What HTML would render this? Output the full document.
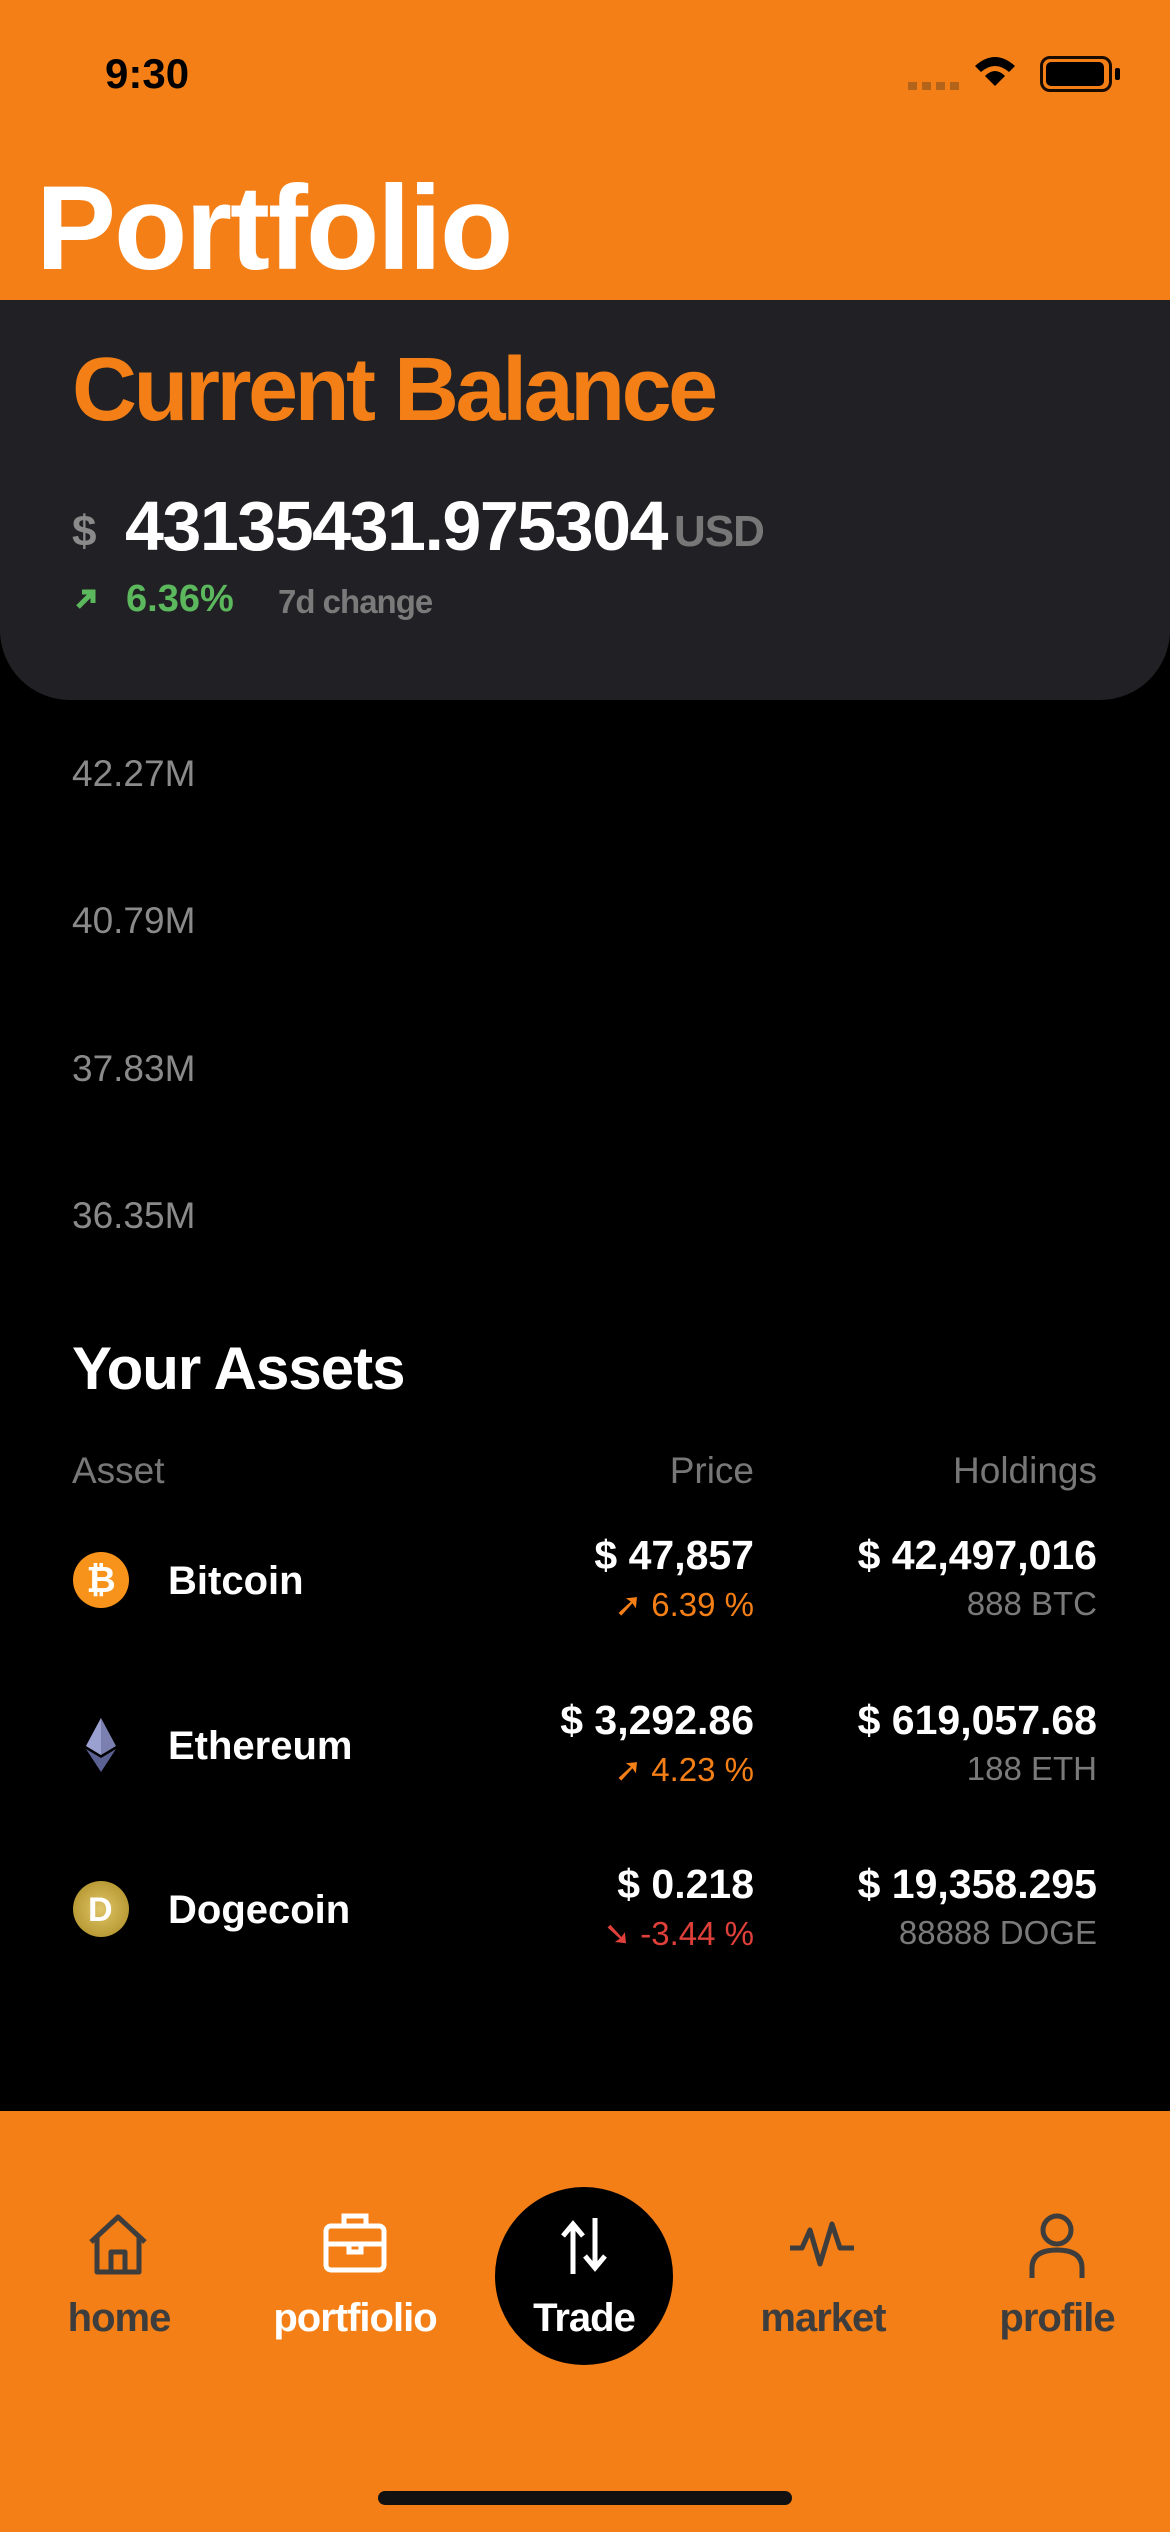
<!DOCTYPE html>
<html><head><meta charset="utf-8"><style>
*{margin:0;padding:0;box-sizing:border-box}
body{width:1170px;height:2532px;background:#000;font-family:"Liberation Sans",sans-serif;position:relative;overflow:hidden;color:#fff}
.a{position:absolute;white-space:nowrap}
.top{position:absolute;left:0;top:0;width:1170px;height:300px;background:#F47F16}
.card{position:absolute;left:0;top:300px;width:1170px;height:400px;background:#212125;border-radius:0 0 70px 70px}
.nav{position:absolute;left:0;top:2111px;width:1170px;height:421px;background:#F47F16}
.r{text-align:right}
.b{font-weight:bold}
.g{color:#8a8a8a}
.lab{position:absolute;top:2296px;font-size:40px;font-weight:bold;color:#3d3d3d;transform:translateX(-50%);letter-spacing:-1px}
</style></head><body>
<div class="top"></div>
<div class="a b" style="left:105px;top:50px;font-size:42px;color:#000">9:30</div>
<div class="a" style="left:908px;top:82px;width:52px;height:8px;background:repeating-linear-gradient(90deg,#b3631a 0 9px,transparent 9px 14px)"></div>
<svg class="a" style="left:972px;top:54px" width="46" height="36" viewBox="0 0 46 36"><path d="M3 12 Q23 -6 43 12 L37 18 Q23 6 9 18Z M13 22 Q23 12 33 22 L23 32Z" fill="#000"/></svg>
<div class="a" style="left:1040px;top:56px;width:72px;height:36px;border:3px solid #000;border-radius:10px;opacity:.9"></div>
<div class="a" style="left:1046px;top:62px;width:58px;height:24px;background:#000;border-radius:5px"></div>
<div class="a" style="left:1115px;top:68px;width:5px;height:12px;background:#000;border-radius:2px"></div>
<div class="a b" style="left:36px;top:163px;font-size:120px;letter-spacing:-2px;line-height:130px">Portfolio</div>

<div class="card"></div>
<div class="a b" style="left:72px;top:340px;font-size:90px;color:#F47F16;letter-spacing:-3.5px;line-height:100px">Current Balance</div>
<div class="a g b" style="left:72px;top:507px;font-size:44px">$</div>
<div class="a b" style="left:125px;top:486px;font-size:70px;letter-spacing:-1.5px">43135431.975304</div>
<div class="a g b" style="left:674px;top:507px;font-size:44px;color:#777;letter-spacing:-1px">USD</div>
<svg class="a" style="left:74px;top:587px" width="24" height="24" viewBox="0 0 24 24"><path d="M4 20 L18 6 M8 5 H19 V16" stroke="#5cb85c" stroke-width="5" fill="none"/></svg>
<div class="a b" style="left:126px;top:578px;font-size:38px;color:#5cb85c">6.36%</div>
<div class="a b" style="left:278px;top:583px;font-size:33px;color:#7a7a7a;letter-spacing:-1px">7d change</div>

<div class="a g" style="left:72px;top:753px;font-size:37px">42.27M</div>
<div class="a g" style="left:72px;top:900px;font-size:37px">40.79M</div>
<div class="a g" style="left:72px;top:1048px;font-size:37px">37.83M</div>
<div class="a g" style="left:72px;top:1195px;font-size:37px">36.35M</div>

<div class="a b" style="left:72px;top:1334px;font-size:60px;letter-spacing:-1px">Your Assets</div>
<div class="a g" style="left:72px;top:1450px;font-size:37px;color:#777">Asset</div>
<div class="a g r" style="right:416px;top:1450px;font-size:37px;color:#777">Price</div>
<div class="a g r" style="right:73px;top:1450px;font-size:37px;color:#777">Holdings</div>

<!-- Bitcoin -->
<div class="a" style="left:73px;top:1552px;width:56px;height:56px;border-radius:50%;background:#F7931A;color:#fff;font-weight:bold;font-size:36px;text-align:center;line-height:56px">₿</div>
<div class="a b" style="left:168px;top:1559px;font-size:40px">Bitcoin</div>
<div class="a b r" style="right:416px;top:1532px;font-size:41px">$ 47,857</div>
<div class="a r" style="right:416px;top:1585px;font-size:33px;color:#F47F16">➚ 6.39 %</div>
<div class="a b r" style="right:73px;top:1532px;font-size:41px">$ 42,497,016</div>
<div class="a r" style="right:73px;top:1585px;font-size:33px;color:#7a7a7a">888 BTC</div>

<!-- Ethereum -->
<svg class="a" style="left:84px;top:1718px" width="34" height="56" viewBox="0 0 34 56"><path d="M17 0 L32 28 L17 37 L2 28Z" fill="#7b80b0"/><path d="M2 31 L17 40 L32 31 L17 54Z" fill="#5c6194"/><path d="M17 0 L17 37 L2 28Z" fill="#9aa0d0"/></svg>
<div class="a b" style="left:168px;top:1724px;font-size:40px">Ethereum</div>
<div class="a b r" style="right:416px;top:1697px;font-size:41px">$ 3,292.86</div>
<div class="a r" style="right:416px;top:1750px;font-size:33px;color:#F47F16">➚ 4.23 %</div>
<div class="a b r" style="right:73px;top:1697px;font-size:41px">$ 619,057.68</div>
<div class="a r" style="right:73px;top:1750px;font-size:33px;color:#7a7a7a">188 ETH</div>

<!-- Doge -->
<div class="a" style="left:73px;top:1881px;width:56px;height:56px;border-radius:50%;background:radial-gradient(#e0c66a,#a8891f);"></div>
<div class="a b" style="left:88px;top:1891px;font-size:34px;color:#fff">D</div>
<div class="a b" style="left:168px;top:1888px;font-size:40px">Dogecoin</div>
<div class="a b r" style="right:416px;top:1861px;font-size:41px">$ 0.218</div>
<div class="a r" style="right:416px;top:1914px;font-size:33px;color:#e0403a">➘ -3.44 %</div>
<div class="a b r" style="right:73px;top:1861px;font-size:41px">$ 19,358.295</div>
<div class="a r" style="right:73px;top:1914px;font-size:33px;color:#7a7a7a">88888 DOGE</div>

<div class="nav"></div>
<svg class="a" style="left:85px;top:2212px" width="66" height="66" viewBox="0 0 66 66"><path d="M6 30 L33 5 L60 30 M12 25 V60 H54 V25 M26 60 V40 H40 V60" stroke="#3d3d3d" stroke-width="5" fill="none" stroke-linejoin="round"/></svg>
<div class="lab" style="left:119px">home</div>
<svg class="a" style="left:322px;top:2210px" width="66" height="66" viewBox="0 0 66 66"><rect x="4" y="16" width="58" height="44" rx="5" stroke="#fff" stroke-width="5" fill="none"/><path d="M22 16 V6 H44 V16 M4 34 H62 M27 34 V42 H39 V34" stroke="#fff" stroke-width="5" fill="none"/></svg>
<div class="lab" style="left:355px;color:#fff">portfiolio</div>
<div class="a" style="left:495px;top:2187px;width:178px;height:178px;border-radius:50%;background:#000"></div>
<svg class="a" style="left:558px;top:2218px" width="52" height="56" viewBox="0 0 52 56"><path d="M15 56 V10 M5 18 L15 6 L25 18 M37 0 V46 M27 38 L37 50 L47 38" stroke="#fff" stroke-width="5" fill="none"/></svg>
<div class="lab" style="left:584px;color:#fff">Trade</div>
<svg class="a" style="left:788px;top:2220px" width="68" height="50" viewBox="0 0 68 50"><path d="M2 28 H14 L22 10 L32 44 L44 4 L52 28 H66" stroke="#3d3d3d" stroke-width="5" fill="none" stroke-linejoin="round"/></svg>
<div class="lab" style="left:823px">market</div>
<svg class="a" style="left:1024px;top:2210px" width="66" height="70" viewBox="0 0 66 70"><circle cx="33" cy="20" r="14" stroke="#3d3d3d" stroke-width="5" fill="none"/><path d="M8 68 V58 Q8 40 33 40 Q58 40 58 58 V68" stroke="#3d3d3d" stroke-width="5" fill="none"/></svg>
<div class="lab" style="left:1057px">profile</div>

<div class="a" style="left:378px;top:2491px;width:414px;height:14px;border-radius:7px;background:#111"></div>
</body></html>
